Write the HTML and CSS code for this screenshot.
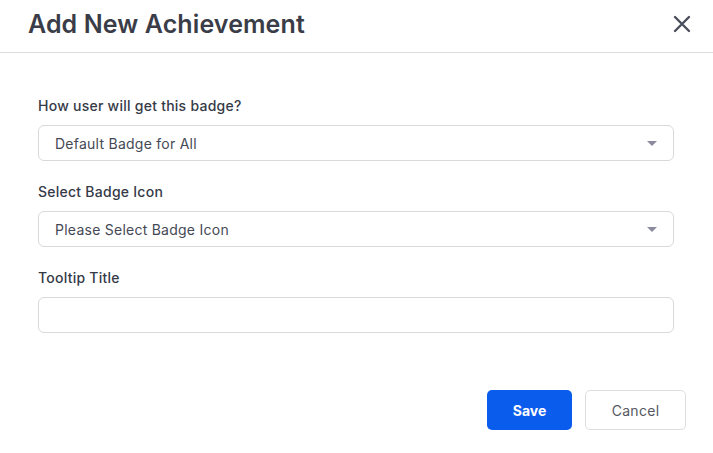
FILE: index.html
```html
<!DOCTYPE html>
<html lang="en">
  <head>
    <meta charset="UTF-8" />
    <meta name="viewport" content="width=device-width, initial-scale=1.0" />
    <title>Add New Achievement</title>
    <link rel="stylesheet" href="styles.css">
  </head>
  <body>
    <div class="modal">
      <div class="modal-header">
        <h1>Add New Achievement</h1>
        <span class="close-btn">
          <svg width="18" height="18" viewBox="0 0 18 18">
            <path d="M2 2 L16 16 M16 2 L2 16" stroke="#4b4f5c" stroke-width="2.4" stroke-linecap="round" />
          </svg>
        </span>
      </div>

      <div class="modal-body">
        <div class="field">
          <label>How user will get this badge?</label>
          <div class="select-box">
            <span>Default Badge for All</span>
            <i class="caret"></i>
          </div>
        </div>

        <div class="field">
          <label>Select Badge Icon</label>
          <div class="select-box">
            <span>Please Select Badge Icon</span>
            <i class="caret"></i>
          </div>
        </div>

        <div class="field">
          <label>Tooltip Title</label>
          <input type="text" class="text-input" />
        </div>
      </div>

      <div class="modal-footer">
        <button class="btn btn-save">Save</button>
        <button class="btn btn-cancel">Cancel</button>
      </div>
    </div>
  </body>
</html>
```

FILE: styles.css
```css
body {
  margin: 0;
  font-family: "Inter", "Open Sans", sans-serif;
  background: #fff;
  color: #363b48;
}

.modal {
  width: 713px;
  height: 453px;
  background: #fff;
}

/* header */
.modal-header {
  display: flex;
  justify-content: space-between;
  align-items: center;
  height: 52px;
  padding: 0 22px 0 28px;
  border-bottom: 1px solid #dcdcdc;
}

.modal-header h1 {
  margin: 0;
  font-size: 25px;
  font-weight: 600;
  color: #3a3d48;
  letter-spacing: 0.1px;
  position: relative;
  top: -2px;
}

.close-btn {
  display: flex;
  position: relative;
  top: -2px;
  cursor: pointer;
}

/* body */
.modal-body {
  padding: 43px 39px 0 38px;
  display: flex;
  flex-direction: column;
  gap: 21px;
}

.field {
  display: flex;
  flex-direction: column;
  gap: 9px;
}

.field label {
  font-size: 14px;
  line-height: 20px;
  font-weight: 500;
  letter-spacing: 0.25px;
  color: #353a47;
}

.select-box,
.text-input {
  box-sizing: border-box;
  height: 36px;
  border: 1px solid #d9d9dc;
  border-radius: 6px;
  background: #fff;
}

.select-box {
  display: flex;
  justify-content: space-between;
  align-items: center;
  padding: 0 16px 0 16px;
  font-size: 14px;
  letter-spacing: 0.25px;
  color: #454955;
}

.caret {
  width: 0;
  height: 0;
  border-left: 5px solid transparent;
  border-right: 5px solid transparent;
  border-top: 5px solid #8b8a9e;
  margin-top: 1px;
}

.text-input {
  width: 100%;
  outline: none;
  font-family: inherit;
}

/* footer */
.modal-footer {
  display: flex;
  justify-content: flex-end;
  gap: 13px;
  padding: 57px 27px 0 0;
}

.btn {
  height: 40px;
  border-radius: 5px;
  font-family: inherit;
  font-size: 14px;
  cursor: pointer;
}

.btn-save {
  width: 85px;
  border: none;
  background-color: #0a5cec;
  color: #fff;
  font-weight: 700;
}

.btn-cancel {
  width: 101px;
  border: 1px solid #dedee2;
  background-color: #fff;
  color: #555862;
  letter-spacing: 0.3px;
}
```
